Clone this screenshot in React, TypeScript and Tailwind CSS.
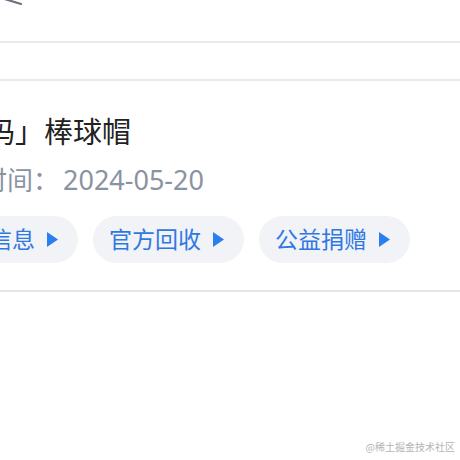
const font = { fontFamily: '"Noto Sans", "Noto Sans CJK SC", sans-serif' };

const actions = ['物品信息', '官方回收', '公益捐赠'];

const ActionPill = ({ label }: { label: string }) => (
  <button className="flex h-[47px] shrink-0 items-center gap-[12px] rounded-full bg-[#f1f3f6] pl-[16px] pr-[20px] text-[23px] text-[#2f78e3]">
    <span>{label}</span>
    <svg width="11" height="15" viewBox="0 0 11 15" className="text-[#2a7ff0]">
      <path d="M0 0 L11 7.5 L0 15 Z" fill="currentColor" />
    </svg>
  </button>
);

export default function App() {
  return (
    <div className="relative h-[460px] w-[460px] overflow-hidden bg-white" style={font}>
      {/* header fragment */}
      <div className="h-[41px]">
        <svg width="30" height="8" viewBox="0 0 30 8" className="block">
          <path d="M-2 -3 L21 4" stroke="#6b7280" strokeWidth="2.2" strokeLinecap="round" fill="none" />
        </svg>
      </div>
      <div className="h-[40px] border-y-2 border-[#e9e9e9]" />
      <div className="border-b-2 border-[#e6e6e6] pb-[27px] pt-[31px]">
        <div className="ml-[-130px] whitespace-nowrap text-[29px] leading-[40px] text-[#222]">「一物一码」棒球帽</div>
        <div className="ml-[-71px] mt-[8px] flex items-baseline whitespace-nowrap leading-[40px] text-[#8a93a2]">
          <span className="text-[26px]">购买时间：</span>
          <span className="ml-[4px] text-[27px]">2024-05-20</span>
        </div>
        <div className="ml-[-73px] mt-[16px] flex gap-[15px]">
          {actions.map(a => (
            <ActionPill key={a} label={a} />
          ))}
        </div>
      </div>
      <div
        className="absolute bottom-[7px] right-[5px] text-[10px] leading-[12px] text-[#b4b4b4]"
        style={{ fontFamily: '"Noto Sans CJK SC", serif' }}
      >
        @稀土掘金技术社区
      </div>
    </div>
  );
}
